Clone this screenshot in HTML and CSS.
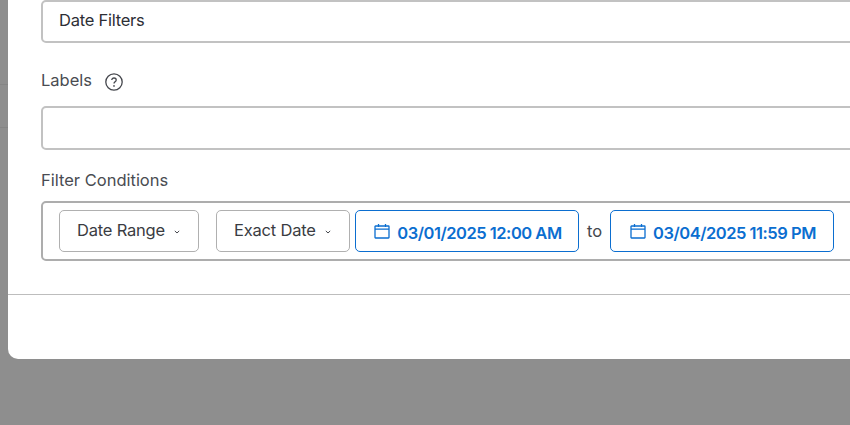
FILE: index.html
```html
<!DOCTYPE html>
<html lang="en">
<head>
<meta charset="utf-8">
<title>Date Filters</title>
<link rel="stylesheet" href="styles.css">
</head>
<body>
<div class="backdrop">
  <div class="strip">
    <div class="strip-row strip-row-first"></div>
    <div class="strip-row"></div>
  </div>
  <main class="modal">
    <div class="body">
      <div class="input name-input">Date Filters</div>
      <div class="label-row labels-row">
        <span class="label">Labels</span>
        <svg class="help" viewBox="0 0 18 18" aria-hidden="true">
          <circle cx="9" cy="9" r="8.2" fill="none" stroke="#45474d" stroke-width="1.3"/>
          <path d="M6.8 7.1c0-1.3 1-2.1 2.2-2.1s2.2.8 2.2 2c0 1.9-2.2 1.8-2.2 3.6" fill="none" stroke="#45474d" stroke-width="1.3"/>
          <circle cx="9" cy="12.9" r=".85" fill="#45474d"/>
        </svg>
      </div>
      <div class="input labels-input"></div>
      <div class="label conditions-label">Filter Conditions</div>
      <div class="conditions">
        <button class="select select-range"><span class="select-text">Date Range</span><svg class="caret" viewBox="0 0 6 4" aria-hidden="true"><path d="M.8.9 3 3l2.2-2.1" fill="none" stroke="#45474d" stroke-width="1"/></svg></button>
        <button class="select select-exact"><span class="select-text">Exact Date</span><svg class="caret" viewBox="0 0 6 4" aria-hidden="true"><path d="M.8.9 3 3l2.2-2.1" fill="none" stroke="#45474d" stroke-width="1"/></svg></button>
        <button class="date">
          <svg class="cal" viewBox="0 0 16 16" aria-hidden="true"><path d="M1.5 3h13a.5.5 0 0 1 .5.5v11a.5.5 0 0 1-.5.5h-13a.5.5 0 0 1-.5-.5v-11a.5.5 0 0 1 .5-.5ZM1 6.2h14M4.5 1v3M11.5 1v3" fill="none" stroke="#0b6ed0" stroke-width="1.3"/></svg>
          <span class="date-text">03/01/2025 12:00 AM</span>
        </button>
        <span class="to">to</span>
        <button class="date">
          <svg class="cal" viewBox="0 0 16 16" aria-hidden="true"><path d="M1.5 3h13a.5.5 0 0 1 .5.5v11a.5.5 0 0 1-.5.5h-13a.5.5 0 0 1-.5-.5v-11a.5.5 0 0 1 .5-.5ZM1 6.2h14M4.5 1v3M11.5 1v3" fill="none" stroke="#0b6ed0" stroke-width="1.3"/></svg>
          <span class="date-text">03/04/2025 11:59 PM</span>
        </button>
      </div>
    </div>
    <div class="footer"></div>
  </main>
</div>
</body>
</html>
```
FILE: styles.css
```css
* { box-sizing: border-box; }
html, body { margin: 0; height: 100%; overflow: hidden; }
body { background: #8e8e8e; font-family: Inter, "Open Sans", sans-serif; font-size: 16.5px; color: #32343a; }
.backdrop { display: flex; align-items: flex-start; width: 850px; overflow: hidden; }
.strip { width: 8px; flex: none; }
.strip-row { height: 43px; border-bottom: 1px solid #858585; }
.strip-row-first { height: 85px; }
.modal { flex: none; width: 992px; height: 359px; background: #fff; border-bottom-left-radius: 10px; display: flex; flex-direction: column; }
.body { padding-left: 33px; height: 295px; border-bottom: 1px solid #bdbdbd; }
.input { border: 2px solid #c2c2c2; border-radius: 5px; width: 900px; }
.name-input { height: 43px; padding: 0 16px 3px; display: flex; align-items: center; color: #2d2f35; letter-spacing: -.25px; }
.label-row { display: flex; align-items: center; gap: 13px; }
.labels-row { margin-top: 26px; height: 24px; }
.label { color: #4a4c52; line-height: 24px; }
.labels-row .label { padding-bottom: 2px; }
.help { width: 18px; height: 18px; margin-top: 2px; }
.labels-input { height: 44px; margin-top: 13px; }
.conditions-label { margin-top: 18px; height: 24px; }
.conditions { margin-top: 9px; width: 900px; height: 60px; border: 2px solid #adadad; border-radius: 5px; padding: 7px 0 0 16px; display: flex; align-items: flex-start; }
button { font: inherit; background: #fff; margin: 0; cursor: pointer; }
.select { height: 42px; border: 1px solid #b0b0b0; border-radius: 5px; color: #3a3c42; padding: 0 0 2px 17px; display: flex; align-items: center; gap: 9px; text-align: left; letter-spacing: -.2px; }
.select-range { width: 140px; }
.select-exact { width: 134px; margin-left: 17px; margin-right: 5px; }
.caret { width: 6px; height: 4px; margin-top: 4px; }
.date { height: 42px; width: 224px; border: 1px solid #0b6ed0; border-radius: 5px; color: #0b6ed0; font-weight: 600; font-size: 16.5px; letter-spacing: -.48px; display: flex; align-items: center; justify-content: center; gap: 7px; padding: 0 0 0 2px; white-space: nowrap; }
.date-text { margin-top: 3px; }
.cal { width: 16px; height: 16px; margin-top: -1px; flex: none; }
.to { width: 31px; height: 42px; line-height: 42px; text-align: center; color: #45474d; }
```
